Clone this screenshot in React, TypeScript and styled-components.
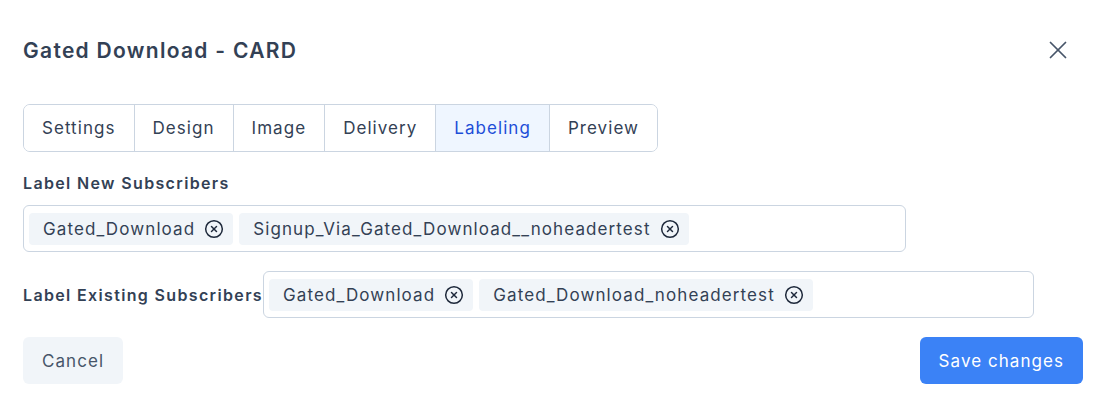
import React, { useState } from 'react';
import styled, { createGlobalStyle } from 'styled-components';
import { X, CircleX } from 'lucide-react';

const GlobalStyle = createGlobalStyle`
  body {
    margin: 0;
    background: #ffffff;
    font-family: Inter, "Open Sans", sans-serif;
    color: #334155;
  }
`;

const Modal = styled.div`
  width: 1102px;
  height: 408px;
  box-sizing: border-box;
  padding: 33px 19px 0 23px;
  display: flex;
  flex-direction: column;
`;

const Header = styled.div`
  display: flex;
  align-items: center;
  justify-content: space-between;
  height: 34px;
`;

const Title = styled.h2`
  margin: 0;
  font-size: 21px;
  font-weight: 600;
  color: #334155;
  letter-spacing: 1.3px;
`;

const CloseButton = styled.button`
  border: none;
  background: none;
  padding: 0;
  margin-right: 10px;
  display: flex;
  color: #475569;
  cursor: pointer;
`;

const Tabs = styled.div`
  display: inline-flex;
  align-self: flex-start;
  margin-top: 37px;
  border: 1px solid #cbd5e1;
  border-radius: 7px;
  overflow: hidden;
`;

const Tab = styled.button<{ $active?: boolean }>`
  height: 46px;
  padding: 0 18px;
  border: none;
  border-left: 1px solid #cbd5e1;
  background: ${(p) => (p.$active ? '#eff6ff' : '#ffffff')};
  color: ${(p) => (p.$active ? '#1d4ed8' : '#334155')};
  font-family: inherit;
  font-size: 17px;
  letter-spacing: 1.05px;
  cursor: pointer;

  &:first-child {
    border-left: none;
  }
`;

const FieldLabel = styled.div`
  font-size: 16px;
  font-weight: 600;
  color: #334155;
  white-space: nowrap;
  letter-spacing: 1.35px;
`;

const StackedField = styled.div`
  display: flex;
  flex-direction: column;
  gap: 12px;
  margin-top: 21px;
`;

const InlineField = styled.div`
  display: flex;
  align-items: center;
  margin-top: 19px;
`;

const TagBox = styled.div<{ $width: number }>`
  width: ${(p) => p.$width}px;
  height: 47px;
  box-sizing: border-box;
  border: 1px solid #cbd5e1;
  border-radius: 6px;
  padding: 0 5px;
  display: flex;
  align-items: center;
  gap: 6px;
`;

const Chip = styled.span`
  height: 32px;
  display: inline-flex;
  align-items: center;
  gap: 9px;
  padding: 0 9px 0 14px;
  background: #f1f5f9;
  border-radius: 4px;
  font-size: 17px;
  color: #334155;
  letter-spacing: 1.1px;

  svg {
    color: #1e293b;
  }
`;

const Footer = styled.div`
  display: flex;
  justify-content: space-between;
  margin-top: 19px;
`;

const Button = styled.button<{ $primary?: boolean }>`
  height: 47px;
  padding: 0 19px;
  border: none;
  border-radius: 6px;
  font-family: inherit;
  font-size: 17px;
  letter-spacing: 1.05px;
  background: ${(p) => (p.$primary ? '#3b82f6' : '#f1f5f9')};
  color: ${(p) => (p.$primary ? '#ffffff' : '#475569')};
  cursor: pointer;
`;

const tabs = ['Settings', 'Design', 'Image', 'Delivery', 'Labeling', 'Preview'];

function Tags({ items, width }: { items: string[]; width: number }) {
  return (
    <TagBox $width={width}>
      {items.map((t) => (
        <Chip key={t}>
          {t}
          <CircleX size={20} strokeWidth={1.8} />
        </Chip>
      ))}
    </TagBox>
  );
}

export default function App() {
  const [active, setActive] = useState('Labeling');

  return (
    <>
      <GlobalStyle />
      <Modal>
        <Header>
          <Title>Gated Download - CARD</Title>
          <CloseButton aria-label="Close">
            <X size={30} strokeWidth={1.4} />
          </CloseButton>
        </Header>
        <Tabs>
          {tabs.map((t) => (
            <Tab key={t} $active={t === active} onClick={() => setActive(t)}>
              {t}
            </Tab>
          ))}
        </Tabs>
        <StackedField>
          <FieldLabel>Label New Subscribers</FieldLabel>
          <Tags width={883} items={['Gated_Download', 'Signup_Via_Gated_Download__noheadertest']} />
        </StackedField>
        <InlineField>
          <FieldLabel>Label Existing Subscribers</FieldLabel>
          <Tags width={771} items={['Gated_Download', 'Gated_Download_noheadertest']} />
        </InlineField>
        <Footer>
          <Button>Cancel</Button>
          <Button $primary>Save changes</Button>
        </Footer>
      </Modal>
    </>
  );
}
